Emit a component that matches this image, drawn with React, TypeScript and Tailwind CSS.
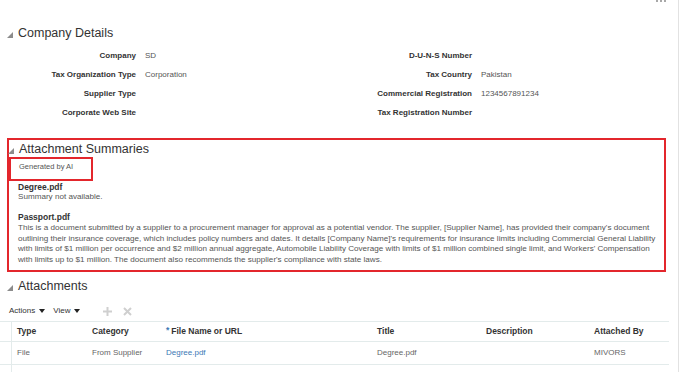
const FONT = "font-['Liberation_Sans',Arial,sans-serif]";

interface Field {
    label: string;
    value?: string;
}

const leftFields: Field[] = [
    { label: 'Company', value: 'SD' },
    { label: 'Tax Organization Type', value: 'Corporation' },
    { label: 'Supplier Type' },
    { label: 'Corporate Web Site' },
];

const rightFields: Field[] = [
    { label: 'D-U-N-S Number' },
    { label: 'Tax Country', value: 'Pakistan' },
    { label: 'Commercial Registration', value: '1234567891234' },
    { label: 'Tax Registration Number' },
];

const columns = [
    { key: 'type', label: 'Type', width: 'w-[75px]' },
    { key: 'category', label: 'Category', width: 'w-[74px]' },
    { key: 'file', label: 'File Name or URL', width: 'w-[211px]', required: true },
    { key: 'title', label: 'Title', width: 'w-[109px]' },
    { key: 'description', label: 'Description', width: 'w-[108px]' },
    { key: 'by', label: 'Attached By', width: 'w-[80px]' },
];

const rows = [
    { type: 'File', category: 'From Supplier', file: 'Degree.pdf', title: 'Degree.pdf', description: '', by: 'MIVORS' },
    { type: 'File', category: 'From Supplier', file: 'Passport.pdf', title: 'Passport.pdf', description: '', by: 'MIVORS' },
];

// Disclosure triangle used by every section header
const Disclosure = () => (
    <svg width="6" height="6" viewBox="0 0 6 6" className="shrink-0 mt-[3px]">
        <polygon points="6,0 6,6 0,6" fill="#8c8c8c" />
    </svg>
);

const SectionHeader = ({ title }: { title: string }) => (
    <div className="flex items-center gap-[5px] h-[16px]">
        <Disclosure />
        <h2 className="text-[12.5px] leading-[16px] text-[#333] font-normal">{title}</h2>
    </div>
);

const Caret = () => (
    <svg width="6" height="4" viewBox="0 0 6 4" className="ml-[4px]">
        <polygon points="0,0 6,0 3,4" fill="#222" />
    </svg>
);

const App = () => {
    return (
        <div className={`w-[680px] h-[372px] overflow-hidden bg-white ${FONT}`}>
            <div className="w-[679px] h-full border-r border-[#e2e2e2]">
                {/* overflow dots, mostly cut off at the top */}
                <div className="flex justify-end gap-[2px] pr-[12px] h-[2px]">
                    <span className="size-[2px] bg-[#a8a8a8]" />
                    <span className="size-[2px] bg-[#a8a8a8]" />
                    <span className="size-[2px] bg-[#a8a8a8]" />
                </div>

                {/* Company Details */}
                <div className="pl-[7px] mt-[23px]">
                    <SectionHeader title="Company Details" />
                </div>
                <div className="grid grid-cols-[136px_204px_132px_1fr] mt-[5px] text-[8px]">
                    {leftFields.map((f, i) => (
                        <div key={f.label} className="contents">
                            <span className="h-[19px] leading-[19px] text-right font-bold text-[#333]">{f.label}</span>
                            <span className="h-[19px] leading-[19px] pl-[9px] text-[#555]">{f.value}</span>
                            <span className="h-[19px] leading-[19px] text-right font-bold text-[#333]">{rightFields[i].label}</span>
                            <span className="h-[19px] leading-[19px] pl-[9px] text-[#555]">{rightFields[i].value}</span>
                        </div>
                    ))}
                </div>

                {/* Attachment Summaries (highlighted) */}
                <div className="ml-[7px] w-[659px] mt-[16px] border-2 border-[#e3262c] pt-[1px] pb-[5px]">
                    <div className="-ml-[1px]">
                        <SectionHeader title="Attachment Summaries" />
                    </div>
                    <div className="w-[84px] h-[24px] border-2 border-[#e3262c] pl-[8px] pt-[3px]">
                        <span className="block text-[7.5px] leading-[10px] text-[#555]">Generated by AI</span>
                    </div>
                    <div className="pl-[9px] pt-[1px] text-[8.1px] text-[#555]">
                        <p className="font-bold text-[8.5px] leading-[10px] text-[#333]">Degree.pdf</p>
                        <p className="leading-[10px]">Summary not available.</p>
                        <p className="font-bold text-[8.5px] leading-[10px] text-[#333] mt-[10px]">Passport.pdf</p>
                        <p className="leading-[10.5px] whitespace-nowrap mt-[1px]">
                            This is a document submitted by a supplier to a procurement manager for approval as a potential vendor. The supplier, [Supplier Name], has provided their company's document
                            <br />
                            outlining their insurance coverage, which includes policy numbers and dates. It details [Company Name]'s requirements for insurance limits including Commercial General Liability
                            <br />
                            with limits of $1 million per occurrence and $2 million annual aggregate, Automobile Liability Coverage with limits of $1 million combined single limit, and Workers' Compensation
                            <br />
                            with limits up to $1 million. The document also recommends the supplier's compliance with state laws.
                        </p>
                    </div>
                </div>

                {/* Attachments */}
                <div className="pl-[7px] mt-[6px]">
                    <SectionHeader title="Attachments" />
                </div>
                <div className="flex items-center h-[12px] mt-[11px] pl-[9px] text-[8px] text-[#333]">
                    <span>Actions</span>
                    <Caret />
                    <span className="ml-[8px]">View</span>
                    <Caret />
                    <svg width="9" height="9" viewBox="0 0 9 9" className="ml-[23px]">
                        <path d="M4.5 0v9M0 4.5h9" stroke="#cfcfcf" strokeWidth="2" />
                    </svg>
                    <svg width="9" height="9" viewBox="0 0 9 9" className="ml-[11px]">
                        <path d="M1 1l7 7M8 1l-7 7" stroke="#cfcfcf" strokeWidth="2" />
                    </svg>
                </div>

                <div className="mt-[4px] w-[669px] text-[8px]">
                    {/* header */}
                    <div className="flex h-[21px] border-y border-[#e3ebeb]">
                        <div className="w-[12px] border-r border-[#e3ebeb]" />
                        {columns.map((c) => (
                            <div key={c.key} className={`${c.width} pl-[5px] flex items-center font-bold text-[8.5px] text-[#333]`}>
                                {c.required && <span className="text-[#3b78b5] mr-[2px] -mt-[3px]">*</span>}
                                {c.label}
                            </div>
                        ))}
                    </div>
                    {rows.map((r, i) => (
                        <div key={i} className="flex h-[23px] border-b border-[#e3ebeb]">
                            <div className="w-[12px] border-r border-[#e3ebeb]" />
                            {columns.map((c) => (
                                <div
                                    key={c.key}
                                    className={`${c.width} pl-[5px] flex items-center ${c.key === 'file' ? 'text-[#3b78b5]' : 'text-[#666]'}`}
                                >
                                    {r[c.key as keyof typeof r]}
                                </div>
                            ))}
                        </div>
                    ))}
                </div>
            </div>
        </div>
    );
};

export default App;
